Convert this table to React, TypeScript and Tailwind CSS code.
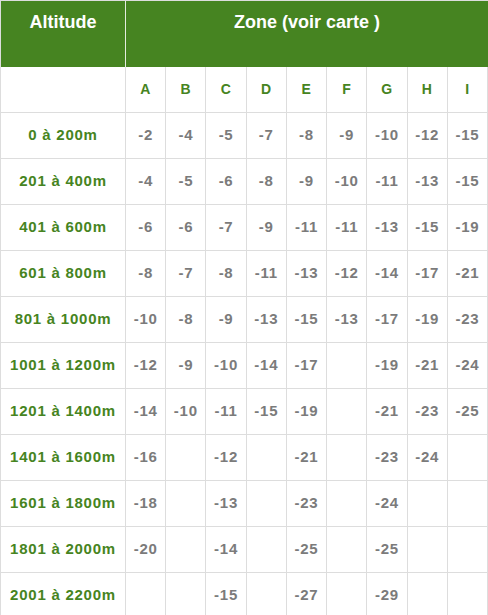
import React from 'react';

const zones = ['A', 'B', 'C', 'D', 'E', 'F', 'G', 'H', 'I'];

const rows: { label: string; values: string[] }[] = [
  { label: '0 à 200m', values: ['-2', '-4', '-5', '-7', '-8', '-9', '-10', '-12', '-15'] },
  { label: '201 à 400m', values: ['-4', '-5', '-6', '-8', '-9', '-10', '-11', '-13', '-15'] },
  { label: '401 à 600m', values: ['-6', '-6', '-7', '-9', '-11', '-11', '-13', '-15', '-19'] },
  { label: '601 à 800m', values: ['-8', '-7', '-8', '-11', '-13', '-12', '-14', '-17', '-21'] },
  { label: '801 à 1000m', values: ['-10', '-8', '-9', '-13', '-15', '-13', '-17', '-19', '-23'] },
  { label: '1001 à 1200m', values: ['-12', '-9', '-10', '-14', '-17', '', '-19', '-21', '-24'] },
  { label: '1201 à 1400m', values: ['-14', '-10', '-11', '-15', '-19', '', '-21', '-23', '-25'] },
  { label: '1401 à 1600m', values: ['-16', '', '-12', '', '-21', '', '-23', '-24', ''] },
  { label: '1601 à 1800m', values: ['-18', '', '-13', '', '-23', '', '-24', '', ''] },
  { label: '1801 à 2000m', values: ['-20', '', '-14', '', '-25', '', '-25', '', ''] },
  { label: '2001 à 2200m', values: ['', '', '-15', '', '-27', '', '-29', '', ''] },
];

const cell = 'h-[46px] flex items-center justify-center border-r border-b border-[#dddddd]';

const App: React.FC = () => {
  return (
    <div className="w-[488px] h-[615px] overflow-hidden bg-white font-['Liberation_Sans',Arial,sans-serif]">
      <div className="grid grid-cols-[125px_repeat(9,minmax(0,1fr))] border-t border-l border-[#dddddd]">
        {/* Header */}
        <div className="h-[66px] bg-[#468421] border-r border-[#e4ecdf] text-white font-bold text-[18px] leading-[24px] text-center pt-[9px]">
          Altitude
        </div>
        <div className="col-span-9 h-[66px] bg-[#468421] text-white font-bold text-[18px] leading-[24px] text-center pt-[9px]">
          Zone (voir carte )
        </div>

        {/* Zone letters */}
        <div className={cell} />
        {zones.map(z => (
          <div key={z} className={`${cell} text-[#468421] font-bold text-[14px] tracking-[0.5px]`}>
            {z}
          </div>
        ))}

        {/* Data */}
        {rows.map(row => (
          <React.Fragment key={row.label}>
            <div className={`${cell} text-[#468421] font-bold text-[15px] tracking-[0.75px]`}>{row.label}</div>
            {row.values.map((v, i) => (
              <div key={i} className={`${cell} text-[#7b7b7b] font-bold text-[15px] tracking-[0.75px]`}>
                {v}
              </div>
            ))}
          </React.Fragment>
        ))}
      </div>
    </div>
  );
};

export default App;
